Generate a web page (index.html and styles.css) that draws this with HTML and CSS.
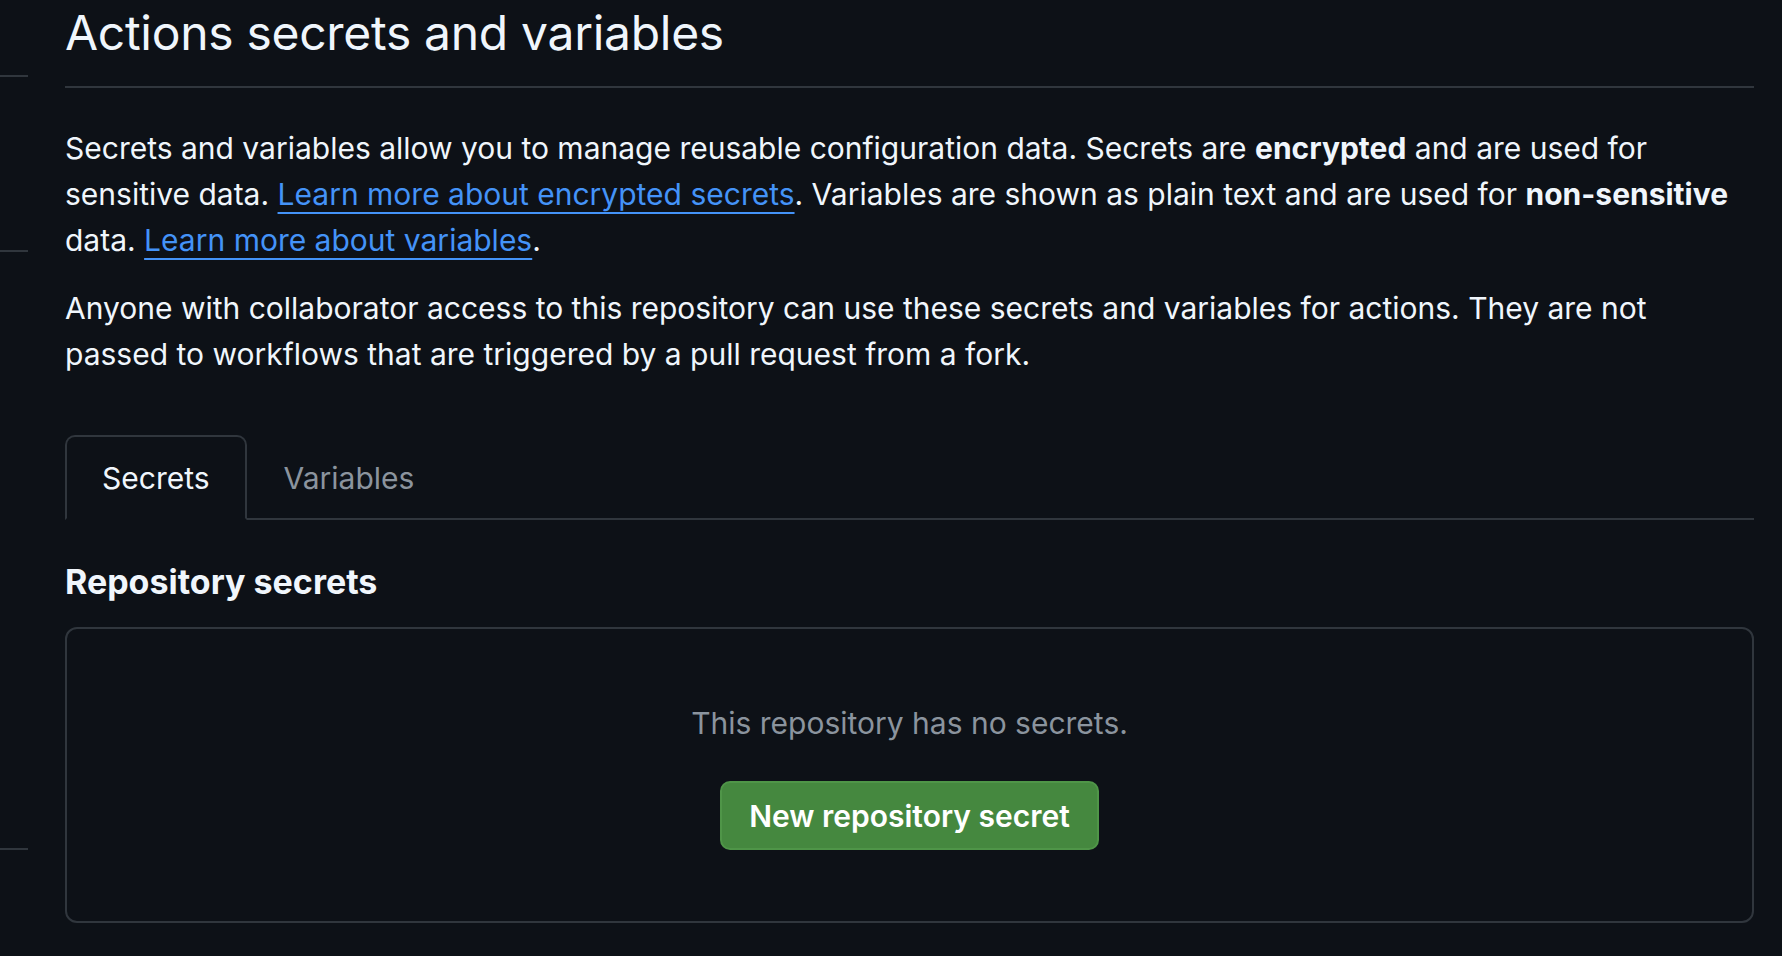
FILE: index.html
```html
<!DOCTYPE html>
<html lang="en">
<head>
<meta charset="utf-8">
<title>Actions secrets and variables</title>
<link rel="stylesheet" href="styles.css">
</head>
<body>
<div class="page">
  <aside class="sidebar">
    <div class="side-gap side-gap-1"></div>
    <div class="side-rule"></div>
    <div class="side-gap side-gap-2"></div>
    <div class="side-rule"></div>
    <div class="side-gap side-gap-3"></div>
    <div class="side-rule"></div>
  </aside>
  <main class="content">
    <div class="subhead">
      <h2 class="subhead-heading">Actions secrets and variables</h2>
    </div>
    <p class="lead">Secrets and variables allow you to manage reusable configuration data. Secrets are <strong>encrypted</strong> and are used for sensitive data. <a href="#" class="link">Learn more about encrypted secrets</a>. Variables are shown as plain text and are used for <strong>non-sensitive</strong> data. <a href="#" class="link">Learn more about variables</a>.</p>
    <p class="lead lead-2">Anyone with collaborator access to this repository can use these secrets and variables for actions. They are not passed to workflows that are triggered by a pull request from a fork.</p>
    <nav class="tabs">
      <a href="#" class="tab tab-selected">Secrets</a>
      <a href="#" class="tab">Variables</a>
    </nav>
    <h3 class="section-title">Repository secrets</h3>
    <div class="blankslate">
      <p class="blank-text">This repository has no secrets.</p>
      <a href="#" class="btn-primary">New repository secret</a>
    </div>
  </main>
</div>
</body>
</html>
```

FILE: styles.css
```css
* { box-sizing: border-box; }
html, body {
  margin: 0;
  padding: 0;
  background: #0d1117;
  color: #f0f6fc;
  font-family: Inter, "Noto Sans", "Liberation Sans", sans-serif;
}
.page {
  display: flex;
  min-height: 956px;
}
.sidebar {
  width: 28px;
  flex: none;
  display: flex;
  flex-direction: column;
}
.side-rule {
  height: 2px;
  background: #30363d;
}
.side-gap-1 { height: 75px; }
.side-gap-2 { height: 173px; }
.side-gap-3 { height: 596px; }

.content {
  margin-left: 37px;
  width: 1689px;
  flex: none;
}
.subhead {
  padding-top: 3px;
  border-bottom: 2px solid #30363d;
  padding-bottom: 23px;
}
.subhead-heading {
  margin: 0;
  font-size: 48px;
  line-height: 60px;
  font-weight: 400;
  letter-spacing: -0.3px;
}
.lead {
  margin: 37px 0 0;
  font-size: 30px;
  line-height: 46px;
}
.lead strong { font-weight: 700; }
.lead-2 { margin-top: 22px; }
.link {
  color: #4493f8;
  text-decoration: underline;
  text-decoration-thickness: 2px;
  text-underline-offset: 7px;
}
.tabs {
  margin-top: 58px;
  display: flex;
  height: 85px;
  border-bottom: 2px solid #30363d;
}
.tab {
  display: flex;
  align-items: center;
  padding: 0 35px;
  margin-bottom: -2px;
  font-size: 30px;
  color: #8b949e;
  text-decoration: none;
  border: 2px solid transparent;
  border-radius: 10px 10px 0 0;
}
.tab-selected {
  color: #f0f6fc;
  background: #0d1117;
  border-color: #30363d;
  border-bottom-color: #0d1117;
}
.section-title {
  margin: 40px 0 0;
  font-size: 34px;
  line-height: 44px;
  font-weight: 700;
}
.blankslate {
  margin-top: 23px;
  height: 296px;
  border: 2px solid #30363d;
  border-radius: 12px;
  display: flex;
  flex-direction: column;
  align-items: center;
  padding-top: 72px;
}
.blank-text {
  margin: 0;
  font-size: 30px;
  line-height: 44px;
  color: #8b949e;
}
.btn-primary {
  margin-top: 36px;
  display: flex;
  align-items: center;
  height: 69px;
  padding: 0 27px;
  background: #45883f;
  border: 2px solid #4f9548;
  border-radius: 10px;
  color: #ffffff;
  font-size: 30px;
  font-weight: 600;
  text-decoration: none;
}
```
